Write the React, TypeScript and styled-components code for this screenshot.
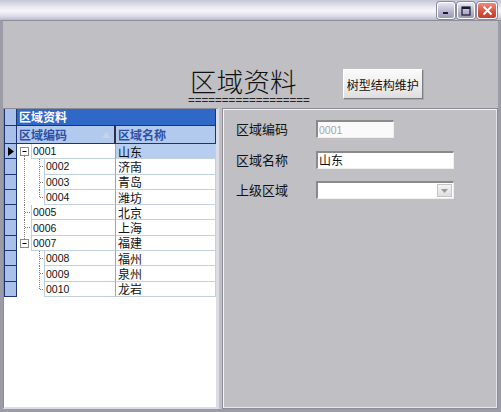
import React from 'react';
import styled, { createGlobalStyle } from 'styled-components';

const Global = createGlobalStyle`
  html, body { margin: 0; padding: 0; background: #c0bfc4; }
  body { width: 501px; height: 412px; overflow: hidden; font-family: "Liberation Sans", "Noto Sans CJK SC", sans-serif; }
`;

const CJK = `"Noto Sans CJK SC", "Liberation Sans", sans-serif`;
const ROW_H = 15.3;

const Window = styled.div`
  width: 501px;
  height: 412px;
  display: flex;
  flex-direction: column;
  box-sizing: border-box;
  overflow: hidden;
`;

const TitleBar = styled.div`
  height: 20px;
  flex: none;
  display: flex;
  justify-content: flex-end;
  align-items: flex-start;
  padding: 2px 4px 0 0;
  box-sizing: border-box;
  gap: 2px;
  background: linear-gradient(#c4c6d6 0%, #e8e9f1 35%, #f6f6fa 55%, #dcdde7 80%, #b8bacb 100%);
`;

const CaptionButton = styled.div<{ $close?: boolean; $w?: number }>`
  width: ${p => p.$w ?? 18}px;
  height: 17px;
  box-sizing: border-box;
  border: 1px solid #ffffff;
  border-radius: 3px;
  background: ${p =>
    p.$close
      ? 'linear-gradient(#ec8c7c, #d4503c 60%, #c2402e)'
      : 'linear-gradient(#e6e6f2, #b4b4cc 60%, #9a9ab6)'};
  box-shadow: 0 0 0 1px #8a8aa0;
  display: flex;
  align-items: center;
  justify-content: center;
`;

const Frame = styled.div`
  flex: 1;
  display: flex;
  flex-direction: column;
  border-top: 1px solid #8e8e9a;
  border-left: 3px solid #9c9ca8;
  border-right: 3px solid #9c9ca8;
  border-bottom: 3px solid #9c9ca8;
  background: #c0bfc4;
  min-height: 0;
`;

const Header = styled.div`
  height: 87px;
  flex: none;
  display: flex;
  align-items: flex-start;
  padding: 45px 0 0 185px;
  box-sizing: border-box;
`;

const TitleBlock = styled.div`
  display: flex;
  flex-direction: column;
`;

const TitleText = styled.div`
  font-family: ${CJK};
  font-size: 26.5px;
  line-height: 30px;
  height: 30px;
  font-weight: 300;
  color: #111;
  padding-left: 2px;
  letter-spacing: 0.2px;
  white-space: nowrap;
`;

const TitleUnderline = styled.div`
  font-family: "Liberation Sans", sans-serif;
  font-size: 11.6px;
  line-height: 8px;
  height: 8px;
  color: #222;
  white-space: nowrap;
`;

const MaintainButton = styled.button`
  margin: 3px 0 0 33px;
  width: 80px;
  height: 30px;
  font-family: ${CJK};
  font-size: 12px;
  color: #111;
  background: linear-gradient(#fafafa, #ececec 60%, #dedede);
  border: 1px solid #ffffff;
  border-right-color: #7c7c84;
  border-bottom-color: #7c7c84;
  box-shadow: 1px 1px 0 #a8a8b0;
  padding: 0;
  cursor: default;
`;

const Content = styled.div`
  flex: 1;
  display: flex;
  gap: 3px;
  min-height: 0;
`;

const LeftPanel = styled.div`
  width: 216px;
  flex: none;
  background: #ffffff;
  box-sizing: border-box;
  border-top: 1px solid #8c8c96;
  border-left: 1px solid #8c8c96;
  border-right: 3px solid #dcdce2;
  border-bottom: 2px solid #dcdce2;
  display: flex;
  flex-direction: column;
`;

const GroupRow = styled.div`
  display: grid;
  grid-template-columns: 13px 1fr;
  height: 16px;
  border-bottom: 1px solid #1e3370;
`;

const RowHeadCell = styled.div<{ $open?: boolean }>`
  background: #a7c1ea;
  border-left: 1px solid #1e3370;
  border-right: 1px solid #1e3370;
  border-bottom: ${p => (p.$open ? 'none' : '1px solid #1e3370')};
  box-sizing: border-box;
  display: flex;
  align-items: center;
  justify-content: center;
`;

const GroupCell = styled.div`
  background: #3068c8;
  color: #ffffff;
  font-family: ${CJK};
  font-weight: 700;
  font-size: 12px;
  line-height: 16px;
  padding-left: 2px;
  border-right: 1px solid #1e3370;
`;

const ColHeadRow = styled.div`
  display: grid;
  grid-template-columns: 13px 99px 1fr;
  height: 17px;
  border-bottom: 1px solid #1e3370;
`;

const ColHead = styled.div<{ $last?: boolean }>`
  background: #b2caee;
  color: #2c50a6;
  font-family: ${CJK};
  font-weight: 700;
  font-size: 12px;
  line-height: 17px;
  padding-left: 2px;
  border-right: ${p => (p.$last ? '1px solid #1e3370' : '2px solid #2a3048')};
  display: flex;
  align-items: center;
  justify-content: space-between;
  padding-right: 4px;
`;

const SortMark = styled.span`
  color: #c8d4e6;
  font-size: 8px;
  line-height: 8px;
`;

const DataRow = styled.div`
  display: grid;
  grid-template-columns: 13px 99px 1fr;
  height: ${ROW_H}px;
`;

const CodeCell = styled.div`
  display: flex;
  min-width: 0;
`;

const CodeText = styled.div`
  flex: 1;
  border-left: 1px solid #c2cfdc;
  border-bottom: 1px solid #c2cfdc;
  border-right: 1px solid #9aa6b6;
  font-family: "Liberation Sans", sans-serif;
  font-size: 10.5px;
  line-height: 12px;
  color: #111;
  display: flex;
  align-items: center;
  padding-left: 1px;
  box-sizing: border-box;
`;

const NameCell = styled.div<{ $sel?: boolean }>`
  background: ${p => (p.$sel ? '#b8cef0' : '#ffffff')};
  border-bottom: 1px solid #c2cfdc;
  border-right: 1px solid #c2cfdc;
  font-family: ${CJK};
  font-size: 12px;
  line-height: 13px;
  color: #111;
  display: flex;
  align-items: center;
  padding-left: 2px;
  box-sizing: border-box;
  overflow: hidden;
`;

const RightPanel = styled.div`
  flex: 1;
  box-sizing: border-box;
  border: 1px solid #8c8c96;
  box-shadow: inset 1px 1px 0 #f4f4f6, inset -1px -1px 0 #e6e6ea;
  display: grid;
  grid-template-columns: 80px 1fr;
  grid-auto-rows: 18px;
  row-gap: 12.5px;
  align-content: start;
  padding: 11px 0 0 13px;
`;

const FieldLabel = styled.div`
  font-family: ${CJK};
  font-size: 13px;
  color: #111;
  display: flex;
  align-items: center;
  line-height: 18px;
`;

const TextBox = styled.div<{ $w: number; $disabled?: boolean }>`
  width: ${p => p.$w}px;
  height: 18px;
  box-sizing: border-box;
  background: ${p => (p.$disabled ? '#fafafa' : '#ffffff')};
  border-top: 2px solid #8a8a8a;
  border-left: 2px solid #8a8a8a;
  border-right: 1px solid #eeeeee;
  border-bottom: 1px solid #eeeeee;
  color: ${p => (p.$disabled ? '#a6a6a6' : '#111')};
  font-family: ${p => (p.$disabled ? '"Liberation Sans", sans-serif' : CJK)};
  font-size: ${p => (p.$disabled ? '10.5px' : '12px')};
  line-height: 14px;
  display: flex;
  align-items: center;
  padding-left: 1px;
`;

const ComboBox = styled(TextBox)`
  justify-content: flex-end;
  padding-right: 1px;
`;

const DropButton = styled.div`
  width: 15px;
  height: 13px;
  box-sizing: border-box;
  background: linear-gradient(#f4f4f4, #dedede);
  border: 1px solid #c4c4c4;
  display: flex;
  align-items: center;
  justify-content: center;
`;

type Row = {
  code: string;
  name: string;
  level: 0 | 1;
  toggle?: boolean;
  sel?: boolean;
  lineAbove?: boolean;
  lineBelow?: boolean;
  rootCont?: boolean;
  lastChild?: boolean;
};

const rows: Row[] = [
  { code: '0001', name: '山东', level: 0, toggle: true, sel: true, lineBelow: true },
  { code: '0002', name: '济南', level: 1, rootCont: true },
  { code: '0003', name: '青岛', level: 1, rootCont: true },
  { code: '0004', name: '潍坊', level: 1, rootCont: true, lastChild: true },
  { code: '0005', name: '北京', level: 0 },
  { code: '0006', name: '上海', level: 0 },
  { code: '0007', name: '福建', level: 0, toggle: true, lineAbove: true },
  { code: '0008', name: '福州', level: 1 },
  { code: '0009', name: '泉州', level: 1 },
  { code: '0010', name: '龙岩', level: 1, lastChild: true },
];

const dot = { stroke: '#7a7a7a', strokeWidth: 1, strokeDasharray: '1 1' };

function TreeGutter({ r }: { r: Row }) {
  const h = ROW_H;
  const mid = 7.5;
  const w = r.level === 0 ? 14 : 27;
  return (
    <svg width={w} height={h} style={{ flex: 'none', display: 'block' }}>
      {r.level === 0 && r.toggle && (
        <>
          {r.lineAbove && <line x1={7.5} y1={0} x2={7.5} y2={3} {...dot} />}
          {r.lineBelow && <line x1={7.5} y1={12} x2={7.5} y2={h} {...dot} />}
          <rect x={3.5} y={3.5} width={8} height={8} fill="#fff" stroke="#8a8a8a" />
          <line x1={5.5} y1={7.5} x2={9.5} y2={7.5} stroke="#000" />
        </>
      )}
      {r.level === 0 && !r.toggle && (
        <>
          <line x1={7.5} y1={0} x2={7.5} y2={h} {...dot} />
          <line x1={8} y1={mid} x2={14} y2={mid} {...dot} />
        </>
      )}
      {r.level === 1 && (
        <>
          {r.rootCont && <line x1={7.5} y1={0} x2={7.5} y2={h} {...dot} />}
          <line x1={22.5} y1={0} x2={22.5} y2={r.lastChild ? mid : h} {...dot} />
          <line x1={23} y1={mid} x2={27} y2={mid} {...dot} />
        </>
      )}
    </svg>
  );
}

export default function App() {
  return (
    <Window>
      <Global />
      <TitleBar>
        <CaptionButton>
          <svg width="8" height="8"><rect x="1" y="5" width="5" height="2" fill="#1a1a30" /></svg>
        </CaptionButton>
        <CaptionButton>
          <svg width="10" height="10"><rect x="1" y="1" width="8" height="8" fill="none" stroke="#1a1a30" strokeWidth="1.2" /><rect x="1" y="1" width="8" height="2" fill="#1a1a30" /></svg>
        </CaptionButton>
        <CaptionButton $close $w={20}>
          <svg width="11" height="11"><path d="M1.5 1.5 L9.5 9.5 M9.5 1.5 L1.5 9.5" stroke="#fff" strokeWidth="1.8" /></svg>
        </CaptionButton>
      </TitleBar>
      <Frame>
        <Header>
          <TitleBlock>
            <TitleText>区域资料</TitleText>
            <TitleUnderline>==================</TitleUnderline>
          </TitleBlock>
          <MaintainButton>树型结构维护</MaintainButton>
        </Header>
        <Content>
          <LeftPanel>
            <GroupRow>
              <RowHeadCell $open />
              <GroupCell>区域资料</GroupCell>
            </GroupRow>
            <ColHeadRow>
              <RowHeadCell $open />
              <ColHead>区域编码<SortMark>▲</SortMark></ColHead>
              <ColHead $last>区域名称</ColHead>
            </ColHeadRow>
            {rows.map(r => (
              <DataRow key={r.code}>
                <RowHeadCell>
                  {r.sel && (
                    <svg width="6" height="9"><path d="M0 0 L6 4.5 L0 9 Z" fill="#000" /></svg>
                  )}
                </RowHeadCell>
                <CodeCell>
                  <TreeGutter r={r} />
                  <CodeText>{r.code}</CodeText>
                </CodeCell>
                <NameCell $sel={r.sel}>{r.name}</NameCell>
              </DataRow>
            ))}
          </LeftPanel>
          <RightPanel>
            <FieldLabel>区域编码</FieldLabel>
            <TextBox $w={78} $disabled>0001</TextBox>
            <FieldLabel>区域名称</FieldLabel>
            <TextBox $w={138}>山东</TextBox>
            <FieldLabel>上级区域</FieldLabel>
            <ComboBox $w={138}>
              <DropButton>
                <svg width="7" height="4"><path d="M0 0 L7 0 L3.5 4 Z" fill="#9a9a9a" /></svg>
              </DropButton>
            </ComboBox>
          </RightPanel>
        </Content>
      </Frame>
    </Window>
  );
}
